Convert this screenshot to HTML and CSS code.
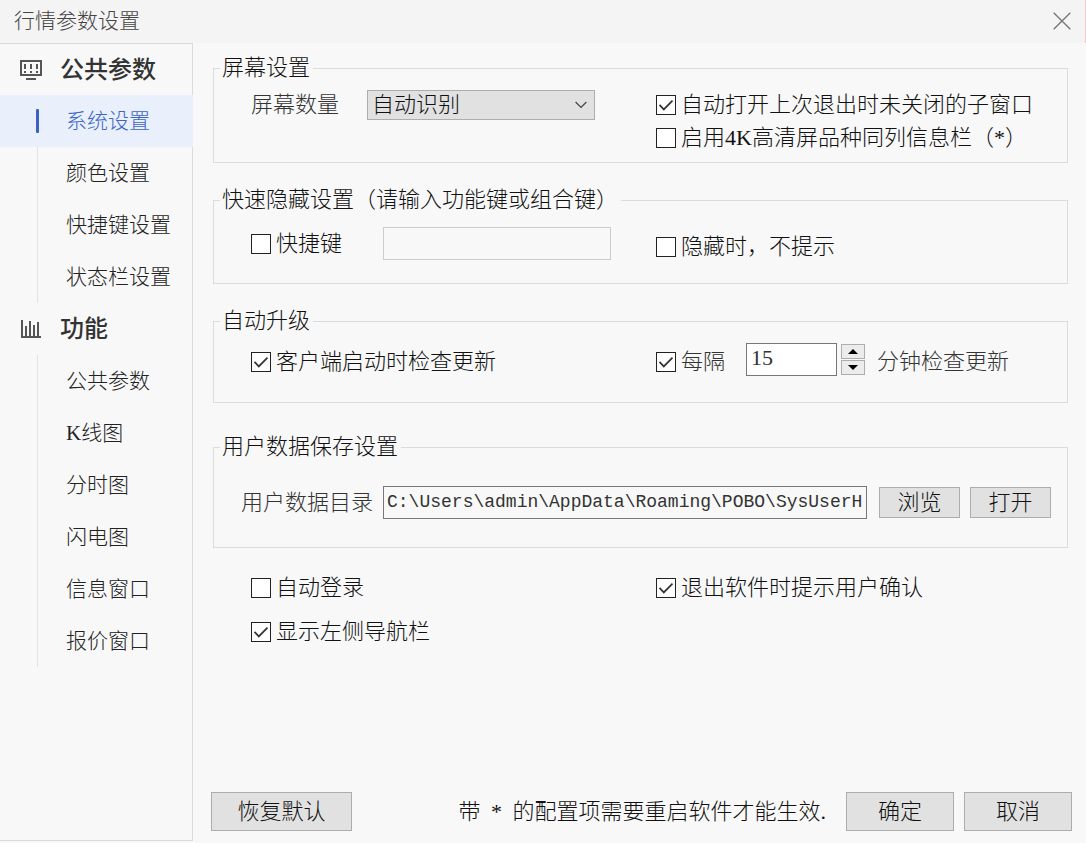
FILE: index.html
```html
<!DOCTYPE html>
<html lang="zh-CN">
<head>
<meta charset="utf-8">
<meta name="viewport" content="width=device-width, initial-scale=1">
<title>行情参数设置</title>
<link rel="stylesheet" href="styles.css">
</head>
<body>
<header class="titlebar">
  <h1 class="title">行情参数设置</h1>
  <button class="close" type="button" aria-label="关闭">
    <svg width="18" height="18" viewBox="0 0 18 18" fill="none" stroke="#777" stroke-width="1.4"><path d="M.7.7l16.6 16.6M17.3.7L.7 17.3"/></svg>
  </button>
</header>
<div class="body">
  <nav class="sidebar">
    <h2 class="group">
      <svg width="22" height="20" viewBox="0 0 22 20" fill="#555"><path fill-rule="evenodd" d="M0 0h22v16H0zM2 2v12h18V2z"/><path d="M4 4h2v5H4zM10 4h2v5h-2zM16 4h2v5h-2zM4 11h2v2H4zM10 11h2v2h-2zM16 11h2v2h-2zM6 18h10v2H6z"/></svg>
      公共参数
    </h2>
    <ul class="items">
      <li><a class="item active" href="#" aria-current="page">系统设置</a></li>
      <li><a class="item" href="#">颜色设置</a></li>
      <li><a class="item" href="#">快捷键设置</a></li>
      <li><a class="item" href="#">状态栏设置</a></li>
    </ul>
    <h2 class="group">
      <svg width="22" height="20" viewBox="0 0 22 20" fill="#555"><path d="M1 1h2v16h18v2H1zM5 7h2v10H5zM9 2h2v15H9zM13 6h2v11h-2zM17 3h2v14h-2z"/></svg>
      功能
    </h2>
    <ul class="items">
      <li><a class="item" href="#">公共参数</a></li>
      <li><a class="item" href="#"><span class="latin">K</span>线图</a></li>
      <li><a class="item" href="#">分时图</a></li>
      <li><a class="item" href="#">闪电图</a></li>
      <li><a class="item" href="#">信息窗口</a></li>
      <li><a class="item" href="#">报价窗口</a></li>
    </ul>
  </nav>
  <main class="main">
    <form class="form">
      <fieldset class="box screen">
        <legend>屏幕设置</legend>
        <div class="columns">
          <div class="row">
            <label class="soft" for="screens">屏幕数量</label>
            <span class="select">
              <select id="screens"><option>自动识别</option></select>
              <svg class="arrow" width="12" height="8" viewBox="0 0 12 8" fill="none" stroke="#444" stroke-width="1.2"><path d="M.6 1L6 6.4 11.4 1"/></svg>
            </span>
          </div>
          <div class="stack">
            <label class="check"><input type="checkbox" checked>自动打开上次退出时未关闭的子窗口</label>
            <label class="check"><input type="checkbox"><span>启用<span class="latin">4K</span>高清屏品种同列信息栏（<span class="latin">*</span>）</span></label>
          </div>
        </div>
      </fieldset>

      <fieldset class="box hide">
        <legend>快速隐藏设置（请输入功能键或组合键）</legend>
        <div class="columns">
          <div class="row">
            <label class="check hotkey"><input type="checkbox">快捷键</label>
            <input class="field key" type="text" aria-label="快捷键" disabled>
          </div>
          <label class="check"><input type="checkbox">隐藏时，不提示</label>
        </div>
      </fieldset>

      <fieldset class="box update">
        <legend>自动升级</legend>
        <div class="columns">
          <label class="check"><input type="checkbox" checked>客户端启动时检查更新</label>
          <div class="row interval">
            <label class="check soft"><input type="checkbox" checked>每隔</label>
            <span class="spin">
              <input class="field minutes" id="minutes" type="text" inputmode="numeric" value="15">
              <span class="steps">
                <button type="button" aria-label="增加"><svg width="10" height="5" viewBox="0 0 10 5"><path d="M5 0l5 5H0z"/></svg></button>
                <button type="button" aria-label="减少"><svg width="10" height="5" viewBox="0 0 10 5"><path d="M0 0h10L5 5z"/></svg></button>
              </span>
            </span>
            <label class="soft" for="minutes">分钟检查更新</label>
          </div>
        </div>
      </fieldset>

      <fieldset class="box data">
        <legend>用户数据保存设置</legend>
        <div class="path-row">
          <label class="soft" for="path">用户数据目录</label>
          <input class="field path" id="path" type="text" value="C:\Users\admin\AppData\Roaming\POBO\SysUserH">
          <div class="actions">
            <button class="button small" type="button">浏览</button>
            <button class="button small" type="button">打开</button>
          </div>
        </div>
      </fieldset>

      <div class="columns options">
        <div class="stack">
          <label class="check"><input type="checkbox">自动登录</label>
          <label class="check"><input type="checkbox" checked>显示左侧导航栏</label>
        </div>
        <div class="stack">
          <label class="check"><input type="checkbox" checked>退出软件时提示用户确认</label>
        </div>
      </div>
    </form>
    <footer class="footer">
      <button class="button reset" type="button">恢复默认</button>
      <p class="note">带 <span class="latin star">*</span> 的配置项需要重启软件才能生效.</p>
      <div class="actions">
        <button class="button" type="button">确定</button>
        <button class="button" type="button">取消</button>
      </div>
    </footer>
  </main>
</div>
</body>
</html>
```
FILE: styles.css
```css
* { box-sizing: border-box; }

body {
  margin: 0;
  min-height: 100vh;
  display: flex;
  flex-direction: column;
  background: #f8f8f8;
  color: #111;
  font: 300 22px/22px "Liberation Serif", "Noto Sans CJK SC", sans-serif;
}

button, input, select { font: inherit; color: inherit; }
.latin { font-weight: 400; }

.titlebar {
  display: flex;
  align-items: center;
  justify-content: space-between;
  height: 43px;
  padding: 0 14px 2px;
  background: #f4f4f4;
  border-right: 1px solid #f3caca;
}
.title { margin: 0; font-size: 21px; font-weight: 300; color: #444; }
.close { display: flex; padding: 0; border: 0; background: none; }

.body { flex: 1; display: flex; }

.sidebar {
  flex: none;
  width: 193px;
  margin-bottom: 2px;
  border: solid #d9dbe4;
  border-width: 1px 1px 1px 0;
}
.group {
  display: flex;
  align-items: center;
  gap: 18px;
  height: 52px;
  margin: 0;
  padding-left: 20px;
  font-size: 24px;
  font-weight: 500;
  color: #333;
}
.group:first-child { height: 51px; }
.items {
  margin: 0 -1px 0 0;
  padding: 0;
  list-style: none;
  background: linear-gradient(#e3e3e6, #e3e3e6) 37px 0 / 1px 100% no-repeat;
}
.item {
  position: relative;
  display: flex;
  align-items: center;
  height: 52px;
  padding-left: 66px;
  font-size: 21px;
  color: #222;
  text-decoration: none;
}
.item.active { background: #e9effb; color: #3c66c4; }
.item.active::before {
  content: "";
  position: absolute;
  left: 36px;
  top: 14px;
  width: 3px;
  height: 24px;
  border-radius: 1px;
  background: #3a62c2;
}

.main {
  flex: 1;
  min-width: 0;
  display: flex;
  flex-direction: column;
  justify-content: space-between;
  padding: 14px 14px 12px 18px;
}
.form { padding: 0 4px 0 2px; }

.box {
  min-width: 0;
  margin: 0 0 26px;
  padding: 0 6px 0 37px;
  border: 1px solid #dcdcdc;
}
.box legend { margin-left: -31px; padding: 0 3px 0 2px; }
.screen { padding-top: 9px; padding-bottom: 8px; }
.hide { padding-top: 16px; padding-bottom: 16px; }
.update { padding-top: 11px; padding-bottom: 21px; margin-bottom: 33px; }
.data { padding: 28px 16px 28px 27px; margin-bottom: 18px; }
.data legend { margin-left: -21px; }

.columns { display: grid; grid-template-columns: 1fr 1fr; align-items: center; }
.screen .columns, .options { align-items: start; }
.hide .columns { min-height: 40px; }
.hide .row { align-self: start; }
.row { display: flex; align-items: center; }
.screen .row { gap: 28px; height: 34px; }
.stack { display: grid; grid-auto-rows: 33px; }
.options { padding: 0 7px 0 38px; }
.options .stack { grid-auto-rows: 44px; }
.soft { color: #333; white-space: nowrap; }

.check { display: flex; align-items: center; gap: 5px; white-space: nowrap; }
.check input {
  appearance: none;
  flex: none;
  width: 20px;
  height: 20px;
  margin: 0;
  border: 1px solid #222;
  background: #fff;
}
.check input:checked {
  background: #fff url("data:image/svg+xml,%3Csvg xmlns='http://www.w3.org/2000/svg' viewBox='0 0 18 18'%3E%3Cpath d='M2.5 8.8l4.3 4.6 8.7-8.8' fill='none' stroke='%23333' stroke-width='1.7'/%3E%3C/svg%3E") center / 18px 18px no-repeat;
}
.hotkey { width: 132px; }

.select { position: relative; width: 228px; }
.select select {
  appearance: none;
  display: block;
  width: 100%;
  height: 30px;
  padding: 0 4px;
  border: 1px solid #adadad;
  border-radius: 0;
  background: #e1e1e1;
}
.arrow { position: absolute; right: 8px; top: 11px; pointer-events: none; }

.field {
  height: 33px;
  min-width: 0;
  border: 1px solid #777;
  border-radius: 0;
  background: #fff;
  color: #333;
  font-weight: 400;
}
.key { width: 228px; border-color: #ccc; background: #f8f8f8; }
.interval { height: 38px; }
.spin {
  display: flex;
  align-items: center;
  align-self: start;
  gap: 4px;
  margin: 0 12px 0 21px;
}
.minutes { width: 91px; padding: 0 4px 4px; }
.steps { display: grid; gap: 1px; }
.steps button {
  display: flex;
  align-items: center;
  justify-content: center;
  width: 24px;
  height: 15px;
  padding: 0;
  border: 1px solid #adadad;
  background: #ececec;
}

.path-row { display: flex; align-items: center; }
.path {
  flex: 1;
  margin: 0 12px 0 10px;
  padding: 0 2px 2px 3px;
  font-family: "Liberation Mono", monospace;
  font-size: 18px;
  background: #f8f8f8;
}
.actions { display: flex; gap: 10px; }

.button {
  width: 108px;
  height: 39px;
  padding: 0;
  border: 1px solid #adadad;
  background: #e1e1e1;
  color: #111;
}
.button.small { width: 81px; height: 31px; }
.button.reset { width: 141px; }

.footer { display: flex; align-items: center; }
.note { margin: 0 20px 0 auto; }
.star { margin: 0 5px; }
```
